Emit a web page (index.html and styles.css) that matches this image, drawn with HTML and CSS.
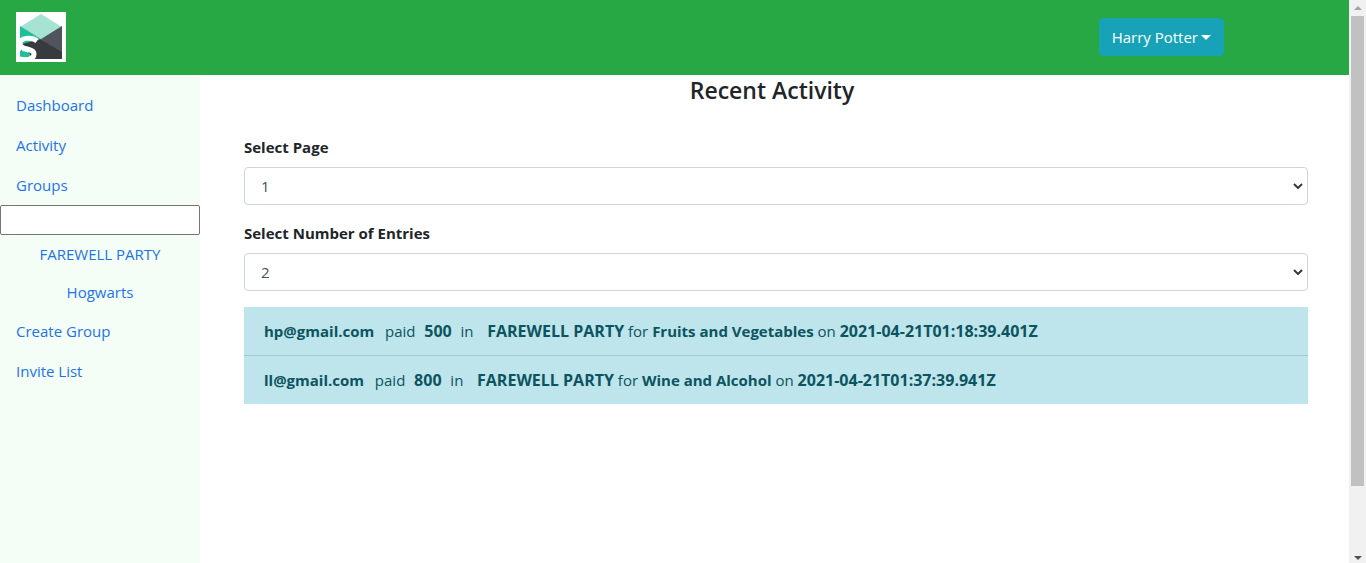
FILE: index.html
```html
<!DOCTYPE html>
<html lang="en">
<head>
<meta charset="utf-8">
<meta name="viewport" content="width=device-width, initial-scale=1">
<title>Recent Activity</title>
<link rel="stylesheet" href="styles.css">
</head>
<body>
<div class="app">
  <header class="navbar">
    <a class="brand" href="#" aria-label="Home">
      <svg viewBox="0 0 50 50" width="50" height="50" aria-hidden="true">
        <path fill="#fff" d="M0 0h50v50H0z"/>
        <path fill="#a6e3d3" d="M25 2 46 15 25 27 4 15z"/>
        <path fill="#1fbf9a" d="M4 14 25 27 4 40z"/>
        <path fill="#50555d" d="M46 14v27L25 27z"/>
        <path fill="#373b3f" d="M25 27 46 40v7H17L6 32z"/>
        <path fill="#fff" d="M0 26h5v24H0z"/>
        <path fill="#1fbf9a" d="M4 39C8 39 14 40 14 43C14 46 8 46 4 45z"/>
        <path fill="none" stroke="#fff" stroke-width="5" d="M21 29C16 25 4 25 4 32C4 38 18 36 18 42C18 49 8 48 3 47"/>
      </svg>
    </a>
    <button class="user-button" type="button" aria-haspopup="true">Harry Potter<span class="caret"></span></button>
  </header>
  <div class="body">
    <nav class="sidebar" aria-label="Main">
      <a class="nav-link" href="#">Dashboard</a>
      <a class="nav-link" href="#">Activity</a>
      <a class="nav-link" href="#">Groups</a>
      <input class="search" type="text" aria-label="Search groups">
      <a class="sub-link" href="#">FAREWELL PARTY</a>
      <a class="sub-link" href="#">Hogwarts</a>
      <a class="nav-link" href="#">Create Group</a>
      <a class="nav-link" href="#">Invite List</a>
    </nav>
    <main class="content">
      <h1 class="title">Recent Activity</h1>
      <div class="field">
        <label for="page">Select Page</label>
        <div class="select-wrap">
          <select id="page"><option>1</option><option>2</option></select>
          <svg class="chevron" viewBox="0 0 10 6" width="10" height="6" aria-hidden="true"><path d="M1 1 5 5 9 1"/></svg>
        </div>
      </div>
      <div class="field">
        <label for="entries">Select Number of Entries</label>
        <div class="select-wrap">
          <select id="entries"><option>2</option><option>5</option></select>
          <svg class="chevron" viewBox="0 0 10 6" width="10" height="6" aria-hidden="true"><path d="M1 1 5 5 9 1"/></svg>
        </div>
      </div>
      <ul class="activity">
        <li><b class="email">hp@gmail.com</b>&nbsp; paid &nbsp;<b class="amount">500</b>&nbsp; in &nbsp; <b class="group">FAREWELL PARTY</b> for <b>Fruits and Vegetables</b> on <b class="date">2021-04-21T01:18:39.401Z</b></li>
        <li><b class="email">ll@gmail.com</b>&nbsp; paid &nbsp;<b class="amount">800</b>&nbsp; in &nbsp; <b class="group">FAREWELL PARTY</b> for <b>Wine and Alcohol</b> on <b class="date">2021-04-21T01:37:39.941Z</b></li>
      </ul>
    </main>
  </div>
</div>
<div class="scrollbar" aria-hidden="true">
  <svg class="arrow arrow-up" viewBox="0 0 8 4" width="8" height="4"><path d="M4 0 8 4H0z"/></svg>
  <div class="track"><div class="thumb"></div></div>
  <svg class="arrow" viewBox="0 0 8 4" width="8" height="4"><path d="M0 0H8L4 4z"/></svg>
</div>
</body>
</html>
```
FILE: styles.css
```css
* { box-sizing: border-box; }

body {
  margin: 0;
  display: flex;
  min-height: 100vh;
  font: 15px/24px "Open Sans", "Noto Sans", sans-serif;
  color: #212529;
  background: #fff;
}

.app {
  flex: 1;
  min-width: 0;
  display: flex;
  flex-direction: column;
}

.navbar {
  display: flex;
  align-items: center;
  justify-content: space-between;
  padding: 12px 125px 13px 16px;
  background: #28a745;
}

.brand, .brand svg { display: block; }

.user-button {
  display: flex;
  align-items: center;
  gap: 3px;
  padding: 6px 12px;
  border: 1px solid #17a2b8;
  border-radius: 4px;
  background: #17a2b8;
  color: #fff;
  font: inherit;
}

.caret {
  border: 5px solid transparent;
  border-top-color: #fff;
  border-bottom: 0;
}

.body {
  flex: 1;
  display: flex;
}

.sidebar {
  flex: 0 0 200px;
  display: flex;
  flex-direction: column;
  padding-top: 10px;
  background: #f5fdf7;
}

.sidebar a {
  color: #1b74e8;
  text-decoration: none;
}

.nav-link { padding: 8px 16px; }

.sub-link {
  padding: 7px 16px;
  text-align: center;
}

.search {
  width: 100%;
  height: 30px;
  padding: 2px;
  border: 1px solid #767676;
  border-radius: 2px;
  background: #fff;
  font: inherit;
}

.content {
  flex: 1;
  min-width: 0;
  padding: 0 41px 0 44px;
}

.title {
  margin: 0 0 30px;
  padding-right: 8px;
  font-size: 23px;
  font-weight: 600;
  line-height: 30px;
  text-align: center;
}

.field { margin-bottom: 16px; }

.field label {
  display: block;
  margin-bottom: 8px;
  font-weight: 700;
}

.select-wrap {
  display: grid;
  align-items: center;
}

.select-wrap > * { grid-area: 1 / 1; }

.select-wrap select {
  width: 100%;
  height: 38px;
  padding: 6px 16px;
  border: 1px solid #ced4da;
  border-radius: 4px;
  background: #fff;
  color: #495057;
  font: inherit;
  appearance: none;
}

.chevron {
  justify-self: end;
  margin-right: 5px;
  fill: none;
  stroke: #343a40;
  stroke-width: 2;
  pointer-events: none;
}

.activity {
  margin: 0;
  padding: 0;
  list-style: none;
  background: #bee5eb;
  color: #0c5460;
}

.activity li { padding: 12px 20px; }

.activity li + li { border-top: 1px solid #a0c9d0; }

.amount, .group, .date {
  font-size: 16px;
  line-height: 20px;
}

.email { margin-right: 3px; }

.amount { margin: 0 1px; }

.group { margin-left: 2px; }

.scrollbar {
  flex: 0 0 17px;
  display: flex;
  flex-direction: column;
  align-items: center;
  padding: 6px 0 3px;
  background: #f1f1f1;
}

.arrow { fill: #505050; }

.arrow-up { fill: #a3a3a3; }

.track {
  flex: 1;
  width: 13px;
  margin: 6px 0;
}

.thumb {
  height: 88%;
  background: #c1c1c1;
}
```
